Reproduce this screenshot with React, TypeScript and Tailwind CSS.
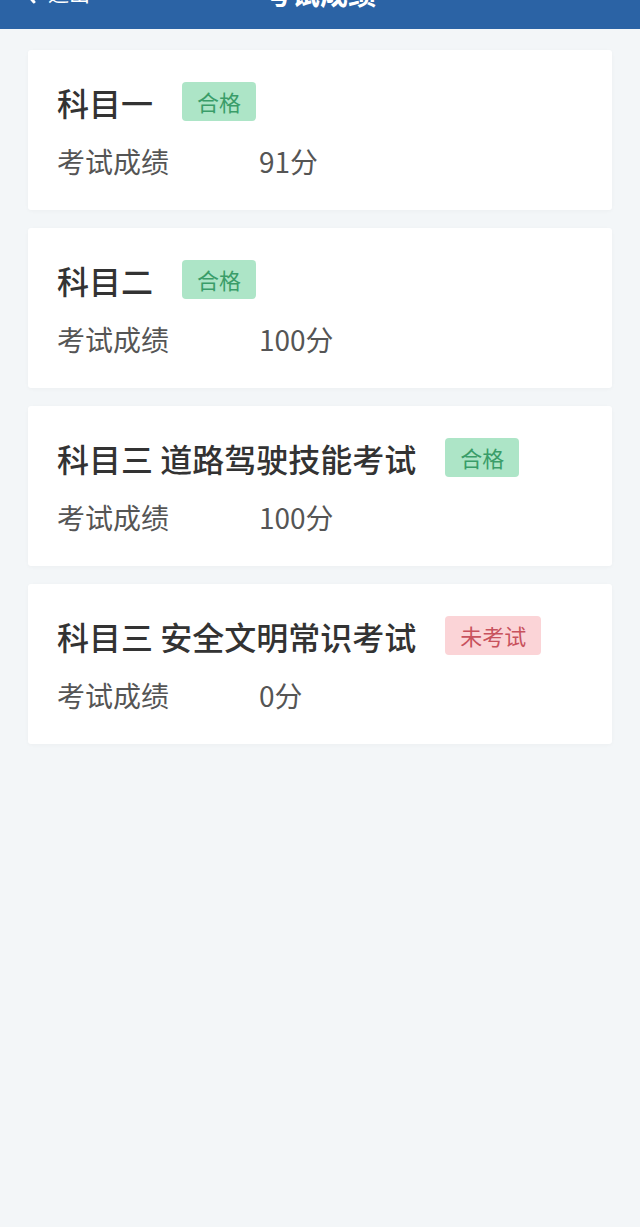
import React from "react";

type Item = { title: string; status: "pass" | "none"; score: string };

const items: Item[] = [
  { title: "科目一", status: "pass", score: "91分" },
  { title: "科目二", status: "pass", score: "100分" },
  { title: "科目三 道路驾驶技能考试", status: "pass", score: "100分" },
  { title: "科目三 安全文明常识考试", status: "none", score: "0分" },
];

export default function App() {
  return (
    <div
      className="min-h-[1227px] w-[640px] bg-[#f3f6f8]"
      style={{ fontFamily: '"Noto Sans CJK SC", "Noto Sans", sans-serif' }}
    >
      <div className="h-[29px] bg-[#2b63a5] overflow-hidden">
        <div className="-mt-[27px] h-[40px] flex items-center relative text-white">
          <div className="flex items-center pl-[22px]">
            <svg width="16" height="24" viewBox="0 0 16 24" fill="none">
              <path d="M12 3 L4 12 L12 21" stroke="white" strokeWidth="3" strokeLinecap="round" strokeLinejoin="round" />
            </svg>
            <span className="ml-[10px] text-[21px]">退出</span>
          </div>
          <div className="absolute left-0 right-0 text-center text-[28px] font-bold">考试成绩</div>
        </div>
      </div>
      <div className="flex flex-col gap-[18px] px-[28px] pt-[21px]">
        {items.map((it, i) => (
          <div key={i} className="bg-white rounded-[3px] shadow-[0_1px_4px_rgba(0,0,0,0.03)] h-[160px] pl-[29px] pt-[32px]">
            <div className="flex items-center h-[39px]">
              <span className="text-[32px] font-medium text-[#333333] leading-none">{it.title}</span>
              {it.status === "pass" ? (
                <span className="ml-[29px] h-[39px] px-[15px] flex items-center rounded-[4px] bg-[#ade5c7] text-[#3a9d69] text-[22px]">合格</span>
              ) : (
                <span className="ml-[29px] h-[39px] px-[15px] flex items-center rounded-[4px] bg-[#fbd4d7] text-[#c8525d] text-[22px]">未考试</span>
              )}
            </div>
            <div className="flex items-center mt-[24px] h-[32px] text-[28px] text-[#555555]">
              <span className="w-[202px]">考试成绩</span>
              <span>{it.score}</span>
            </div>
          </div>
        ))}
      </div>
    </div>
  );
}
